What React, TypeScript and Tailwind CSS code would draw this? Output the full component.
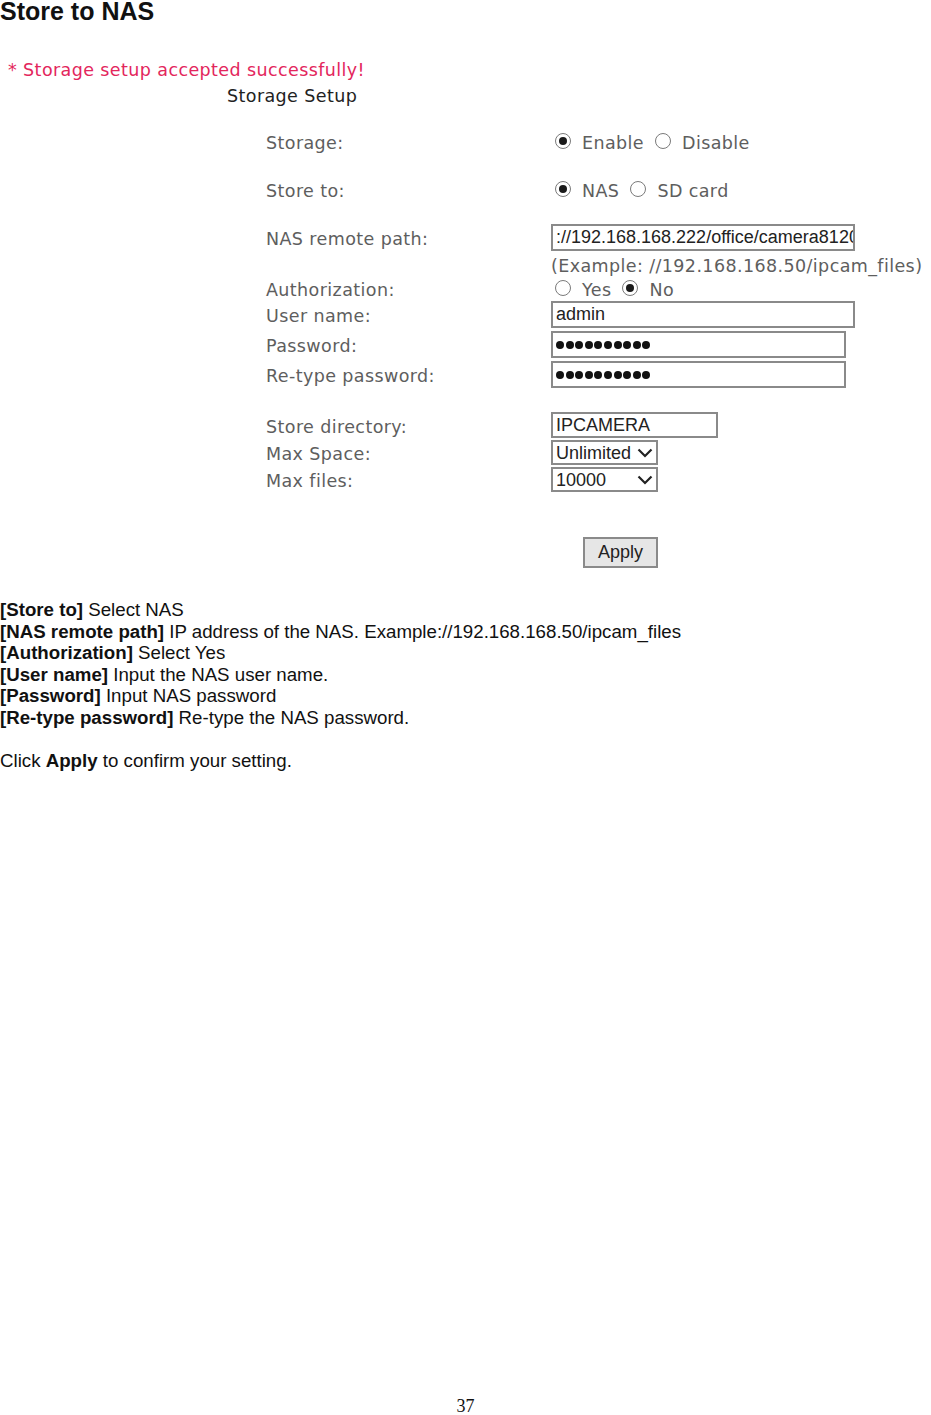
import React from "react";

const verdana = "font-['DejaVu_Sans',Verdana,sans-serif] text-[17.5px] tracking-[0.4px]";
const label = `${verdana} text-[#5e5e5e]`;
const field = "font-['Liberation_Sans',Arial,sans-serif] text-[18px] text-[#222]";

function Radio({ checked }: { checked?: boolean }) {
  return (
    <span className="w-[16px] h-[16px] rounded-full border border-[#7a7a7a] bg-white flex items-center justify-center shrink-0">
      {checked && <span className="w-[8px] h-[8px] rounded-full bg-[#1a1a1a]" />}
    </span>
  );
}

function RadioPair({ a, b, aOn }: { a: string; b: string; aOn?: boolean }) {
  return (
    <div className={`flex items-center ${label}`}>
      <span className="ml-[4px]">
        <Radio checked={aOn} />
      </span>
      <span className="ml-[11px] pt-[4px]">{a}</span>
      <span className="ml-[11px]">
        <Radio checked={!aOn} />
      </span>
      <span className="ml-[11px] pt-[4px]">{b}</span>
    </div>
  );
}

function Dots() {
  return (
    <div className="flex items-center gap-[1.6px] pl-[3px]">
      {Array.from({ length: 10 }).map((_, i) => (
        <span key={i} className="w-[8px] h-[8px] rounded-full bg-[#111]" />
      ))}
    </div>
  );
}

function Chevron() {
  return (
    <svg width="16" height="10" viewBox="0 0 16 10" className="shrink-0">
      <polyline points="1.5,1.5 8,8 14.5,1.5" fill="none" stroke="#222" strokeWidth="2.2" />
    </svg>
  );
}

function Select({ value }: { value: string }) {
  return (
    <div className={`w-[107px] h-full border-2 border-[#8a8a8a] bg-white flex items-center justify-between pl-[3px] pr-[3px] ${field}`}>
      <span className="leading-none">{value}</span>
      <Chevron />
    </div>
  );
}

function Row({ name, h, mt, children }: { name?: string; h: number; mt: number; children?: React.ReactNode }) {
  return (
    <div className="flex items-center" style={{ height: h, marginTop: mt }}>
      <div className={`w-[285px] shrink-0 pt-[4px] ${label}`}>{name}</div>
      <div className="h-full flex items-center">{children}</div>
    </div>
  );
}

const notes: [string, string][] = [
  ["[Store to]", " Select NAS"],
  ["[NAS remote path]", " IP address of the NAS. Example://192.168.168.50/ipcam_files"],
  ["[Authorization]", " Select Yes"],
  ["[User name]", " Input the NAS user name."],
  ["[Password]", " Input NAS password"],
  ["[Re-type password]", " Re-type the NAS password."],
];

export default function App() {
  return (
    <div className="w-[931px] h-[1415px] bg-white flex flex-col overflow-hidden">
      <h1 className="font-['Liberation_Sans',Arial,sans-serif] font-bold text-[25px] leading-[22px] text-[#111]">
        Store to NAS
      </h1>

      {/* embedded screenshot of the camera web page */}
      <div className="mt-[36px]">
        <p className={`pl-[8px] h-[24px] leading-[24px] ${verdana} text-[#e3265c]`}>
          * Storage setup accepted successfully!
        </p>
        <p className={`pl-[227px] mt-[1px] h-[24px] leading-[24px] pt-[1px] ${verdana} text-[#222]`}>
          Storage Setup
        </p>

        <div className="pl-[266px]">
          <Row name="Storage:" h={26} mt={21}>
            <RadioPair a="Enable" b="Disable" aOn />
          </Row>
          <Row name="Store to:" h={26} mt={22}>
            <RadioPair a="NAS" b="SD card" aOn />
          </Row>
          <Row name="NAS remote path:" h={27} mt={22}>
            <div className={`w-[304px] h-full border-2 border-[#8a8a8a] bg-white overflow-hidden whitespace-nowrap flex items-center pl-[3px] ${field}`}>
              ://192.168.168.222/office/camera8120
            </div>
          </Row>
          <Row h={24} mt={1}>
            <span className={`${label} pt-[4px] whitespace-nowrap`}>(Example: //192.168.168.50/ipcam_files)</span>
          </Row>
          <Row name="Authorization:" h={24} mt={0}>
            <RadioPair a="Yes" b="No" />
          </Row>
          <Row name="User name:" h={27} mt={1}>
            <div className={`w-[304px] h-full border-2 border-[#8a8a8a] bg-white flex items-center pl-[3px] ${field}`}>
              admin
            </div>
          </Row>
          <Row name="Password:" h={27} mt={3}>
            <div className="w-[295px] h-full border-2 border-[#8a8a8a] bg-white flex items-center">
              <Dots />
            </div>
          </Row>
          <Row name="Re-type password:" h={27} mt={3}>
            <div className="w-[295px] h-full border-2 border-[#8a8a8a] bg-white flex items-center">
              <Dots />
            </div>
          </Row>
          <Row name="Store directory:" h={26} mt={24}>
            <div className={`w-[167px] h-full border-2 border-[#8a8a8a] bg-white flex items-center pl-[3px] ${field}`}>
              IPCAMERA
            </div>
          </Row>
          <Row name="Max Space:" h={25} mt={2}>
            <Select value="Unlimited" />
          </Row>
          <Row name="Max files:" h={25} mt={2}>
            <Select value="10000" />
          </Row>
          <Row h={31} mt={45}>
            <button className={`ml-[32px] w-[75px] h-full border-2 border-[#8a8a8a] bg-[#e6e6e6] ${field} text-[#1e2a4a]`}>
              Apply
            </button>
          </Row>
        </div>
      </div>

      <div className="mt-[31px] font-['Liberation_Sans',Arial,sans-serif] text-[18.7px] leading-[21.6px] text-[#111]">
        {notes.map(([k, v]) => (
          <p key={k}>
            <b>{k}</b>
            {v}
          </p>
        ))}
        <p className="mt-[21.6px]">
          Click <b>Apply</b> to confirm your setting.
        </p>
      </div>

      <div className="mt-auto text-center font-['Liberation_Serif','Times_New_Roman',serif] text-[18px] leading-[17px] text-[#111]">
        37
      </div>
    </div>
  );
}
